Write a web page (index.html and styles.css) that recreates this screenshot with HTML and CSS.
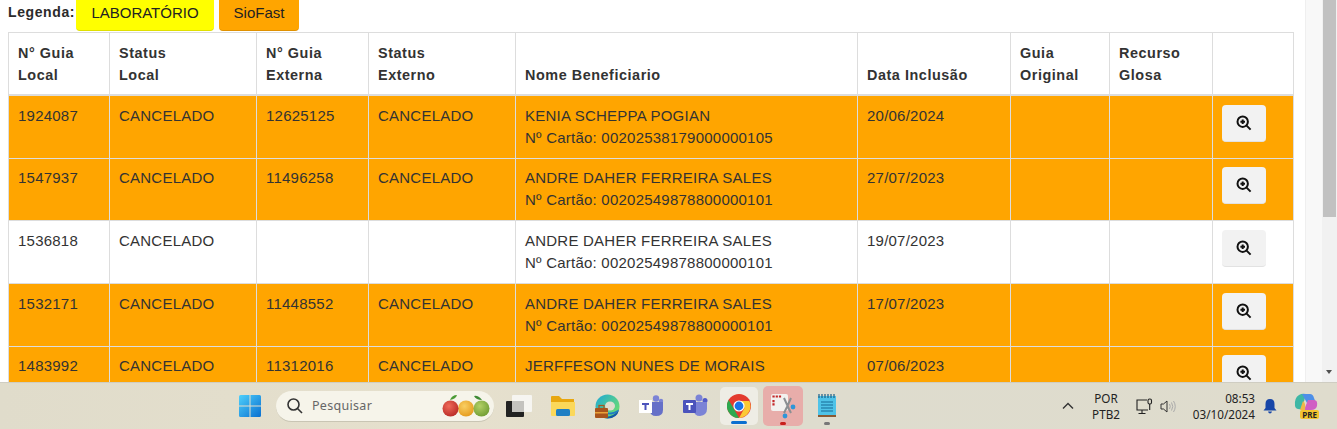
FILE: index.html
```html
<!DOCTYPE html>
<html>
<head>
    <meta charset="UTF-8">
    <link rel="stylesheet" href="styles.css">
</head>
<body>
    <div class="window">
        <div class="page">
            <div class="legend">
                <span class="legend-label">Legenda:</span>
                <button class="legend-btn lab">LABORATÓRIO</button>
                <button class="legend-btn sio">SioFast</button>
            </div>
            <table class="grid">
                <thead>
                    <tr>
                        <th class="c1">N° Guia<br>Local</th>
                        <th class="c2">Status<br>Local</th>
                        <th class="c3">N° Guia<br>Externa</th>
                        <th class="c4">Status<br>Externo</th>
                        <th class="c5">Nome Beneficiario</th>
                        <th class="c6">Data Inclusão</th>
                        <th class="c7">Guia<br>Original</th>
                        <th class="c8">Recurso<br>Glosa</th>
                        <th class="c9"></th>
                    </tr>
                </thead>
                <tbody>
                    <tr class="siofast">
                        <td>1924087</td>
                        <td>CANCELADO</td>
                        <td>12625125</td>
                        <td>CANCELADO</td>
                        <td>KENIA SCHEPPA POGIAN<br>Nº Cartão: 00202538179000000105</td>
                        <td>20/06/2024</td>
                        <td></td>
                        <td></td>
                        <td><button class="zoom-btn"><svg viewBox="0 0 16 16"><circle cx="6.7" cy="6.7" r="5.2"/><path d="M10.6 10.6 14.6 14.6M4.4 6.7H9M6.7 4.4V9"/></svg></button></td>
                    </tr>
                    <tr class="siofast">
                        <td>1547937</td>
                        <td>CANCELADO</td>
                        <td>11496258</td>
                        <td>CANCELADO</td>
                        <td>ANDRE DAHER FERREIRA SALES<br>Nº Cartão: 00202549878800000101</td>
                        <td>27/07/2023</td>
                        <td></td>
                        <td></td>
                        <td><button class="zoom-btn"><svg viewBox="0 0 16 16"><circle cx="6.7" cy="6.7" r="5.2"/><path d="M10.6 10.6 14.6 14.6M4.4 6.7H9M6.7 4.4V9"/></svg></button></td>
                    </tr>
                    <tr>
                        <td>1536818</td>
                        <td>CANCELADO</td>
                        <td></td>
                        <td></td>
                        <td>ANDRE DAHER FERREIRA SALES<br>Nº Cartão: 00202549878800000101</td>
                        <td>19/07/2023</td>
                        <td></td>
                        <td></td>
                        <td><button class="zoom-btn"><svg viewBox="0 0 16 16"><circle cx="6.7" cy="6.7" r="5.2"/><path d="M10.6 10.6 14.6 14.6M4.4 6.7H9M6.7 4.4V9"/></svg></button></td>
                    </tr>
                    <tr class="siofast">
                        <td>1532171</td>
                        <td>CANCELADO</td>
                        <td>11448552</td>
                        <td>CANCELADO</td>
                        <td>ANDRE DAHER FERREIRA SALES<br>Nº Cartão: 00202549878800000101</td>
                        <td>17/07/2023</td>
                        <td></td>
                        <td></td>
                        <td><button class="zoom-btn"><svg viewBox="0 0 16 16"><circle cx="6.7" cy="6.7" r="5.2"/><path d="M10.6 10.6 14.6 14.6M4.4 6.7H9M6.7 4.4V9"/></svg></button></td>
                    </tr>
                    <tr class="siofast">
                        <td>1483992</td>
                        <td>CANCELADO</td>
                        <td>11312016</td>
                        <td>CANCELADO</td>
                        <td>JERFFESON NUNES DE MORAIS</td>
                        <td>07/06/2023</td>
                        <td></td>
                        <td></td>
                        <td><button class="zoom-btn"><svg viewBox="0 0 16 16"><circle cx="6.7" cy="6.7" r="5.2"/><path d="M10.6 10.6 14.6 14.6M4.4 6.7H9M6.7 4.4V9"/></svg></button></td>
                    </tr>
                </tbody>
            </table>
        </div>
        <div class="gutter"></div>
        <div class="scrollbar">
            <div class="thumb"></div>
            <div class="arrow"></div>
        </div>
    </div>

    <div class="taskbar">
        <div class="slot">
            <svg width="24" height="24" viewBox="0 0 24 24">
                <defs>
                    <linearGradient id="win" x1="0" y1="0" x2="1" y2="1"><stop offset="0" stop-color="#4fd0fb"/><stop offset="1" stop-color="#0a6fd0"/></linearGradient>
                </defs>
                <path fill="url(#win)" d="M1 2.5Q1 1 2.5 1H11.5V11.5H1ZM12.5 1H21.5Q23 1 23 2.5V11.5H12.5ZM1 12.5H11.5V23H2.5Q1 23 1 21.5ZM12.5 12.5H23V21.5Q23 23 21.5 23H12.5Z"/>
            </svg>
        </div>
        <div class="search">
            <svg class="search-icon" width="18" height="18" viewBox="0 0 18 18"><circle cx="7.5" cy="7.5" r="5.5"/><path d="M11.5 11.5 16 16"/></svg>
            <span class="search-text">Pesquisar</span>
            <svg class="apples" width="54" height="24" viewBox="0 0 54 24">
                <defs>
                    <radialGradient id="red" cx="0.4" cy="0.35" r="0.7"><stop offset="0" stop-color="#ef6a5a"/><stop offset="1" stop-color="#b82a26"/></radialGradient>
                    <radialGradient id="yel" cx="0.4" cy="0.35" r="0.7"><stop offset="0" stop-color="#f9cf63"/><stop offset="1" stop-color="#e59a1c"/></radialGradient>
                    <radialGradient id="grn" cx="0.4" cy="0.35" r="0.7"><stop offset="0" stop-color="#b3d066"/><stop offset="1" stop-color="#6f9c33"/></radialGradient>
                </defs>
                <path d="M10 6Q12 1 17 1Q16 5 10 6Z" fill="#4b9a35"/>
                <path d="M42 6Q38 1 34 2Q36 6 42 6Z" fill="#3e8a35"/>
                <circle cx="26" cy="14.5" r="8" fill="url(#yel)"/>
                <circle cx="41.5" cy="14.5" r="8" fill="url(#grn)"/>
                <circle cx="10.5" cy="14.5" r="8" fill="url(#red)"/>
            </svg>
        </div>
        <div class="slot">
            <svg width="26" height="23" viewBox="0 0 26 23">
                <rect x="6" y="0" width="20" height="17" rx="1" fill="#f6f5f1"/>
                <rect x="0" y="6" width="18" height="16" rx="1" fill="#222"/>
                <rect x="6" y="6" width="12" height="11" fill="#c4c3bf"/>
            </svg>
        </div>
        <div class="slot">
            <svg width="26" height="24" viewBox="0 0 26 24">
                <path d="M1 3Q1 2 2 2H9L12 5H24V20Q24 21 23 21H2Q1 21 1 20Z" fill="#e8a70f"/>
                <path d="M1 8H25V21Q25 22 24 22H2Q1 22 1 21Z" fill="#fbd85a"/>
                <rect x="6" y="15" width="14" height="7" rx="1.5" fill="#1f7fc4"/>
            </svg>
        </div>
        <div class="slot">
            <svg width="25" height="25" viewBox="0 0 25 25">
                <defs>
                    <linearGradient id="edge" x1="0" y1="0" x2="1" y2="0.8"><stop offset="0" stop-color="#1ea8d8"/><stop offset="1" stop-color="#6fe06a"/></linearGradient>
                </defs>
                <circle cx="12.5" cy="12.5" r="12" fill="url(#edge)"/>
                <path d="M7 22Q16 25 24 16Q22 24.5 12.5 24.5Q9 24.5 7 22Z" fill="#1358a8"/>
                <path d="M9 17Q15 21 24 15.5Q23 19 16 20.5Q10 20.5 9 17Z" fill="#1f78c8"/>
                <ellipse cx="15" cy="12" rx="5" ry="4.5" fill="#dfdccd"/>
                <rect x="0" y="14" width="13" height="10" rx="1" fill="#a9541c"/>
                <rect x="0" y="18" width="13" height="1.5" fill="#e9a23a"/>
                <rect x="4" y="11.5" width="5" height="3" fill="none" stroke="#a9541c" stroke-width="1.2"/>
            </svg>
        </div>
        <div class="slot">
            <svg width="26" height="24" viewBox="0 0 26 24">
                <circle cx="18" cy="4.5" r="3.2" fill="#7b83d6"/>
                <circle cx="23" cy="7" r="2.2" fill="#7b83d6"/>
                <path d="M12 8H25V16Q25 22 18 22Q12 22 12 16Z" fill="#6670c8"/>
                <rect x="1" y="6" width="13" height="13" fill="#fff"/>
                <path d="M4 9H11V11H8.5V16H6.5V11H4Z" fill="#4b53bc"/>
            </svg>
        </div>
        <div class="slot">
            <svg width="26" height="24" viewBox="0 0 26 24">
                <circle cx="17" cy="4" r="3.5" fill="#7b83d6"/>
                <circle cx="23" cy="6.5" r="2.5" fill="#5059c9"/>
                <path d="M12 8H25V15Q25 21 18 22Q12 22 12 16Z" fill="#7b83d6"/>
                <rect x="1" y="6" width="13" height="13" rx="1" fill="#4b53bc"/>
                <path d="M4 9H11V11H8.5V16H6.5V11H4Z" fill="#fff"/>
            </svg>
        </div>
        <div class="slot active chrome">
            <svg width="24" height="24" viewBox="0 0 24 24">
                <circle cx="12" cy="12" r="12" fill="#e33b2e"/>
                <path d="M12 24A12 12 0 0 1 1.6 6L7 15 12 24Z" fill="#2da94f"/>
                <path d="M12 24 17.5 14 12 7H22.4A12 12 0 0 1 12 24Z" fill="#fcc934"/>
                <circle cx="12" cy="12" r="5.6" fill="#fff"/>
                <circle cx="12" cy="12" r="4.4" fill="#1a73e8"/>
            </svg>
            <span class="run-mark blue"></span>
        </div>
        <div class="slot active snip">
            <svg width="26" height="26" viewBox="0 0 26 26">
                <rect x="1" y="1" width="17" height="17" rx="2" fill="#f2f1ef"/>
                <path d="M3.5 4.5V3.5H12M3.5 7V13" fill="none" stroke="#c4282a" stroke-width="2.2" stroke-dasharray="2.2 1"/>
                <path d="M14 5 19 16 21 20M21 5 17 14 14 20" stroke="#8b8f93" stroke-width="2" fill="none"/>
                <circle cx="23" cy="14" r="2.4" fill="#2f96d8"/>
                <circle cx="15" cy="23" r="2.4" fill="#2f96d8"/>
            </svg>
            <span class="run-mark red"></span>
        </div>
        <div class="slot">
            <svg width="20" height="26" viewBox="0 0 20 26">
                <rect x="1" y="3" width="18" height="20" fill="#4fc3e8"/>
                <path d="M2 1V5M5 1V5M8 1V5M11 1V5M14 1V5M17 1V5" stroke="#1c5f86" stroke-width="1.2"/>
                <path d="M4 9H16M4 12H16M4 15H16M4 18H16" stroke="#166a96" stroke-width="1.2"/>
                <rect x="1" y="22" width="18" height="2" fill="#8a5a34"/>
            </svg>
            <span class="run-mark grey"></span>
        </div>

        <div class="tray">
            <svg class="chevron" width="12" height="8" viewBox="0 0 12 8"><path d="M1 6.5 6 1.5 11 6.5"/></svg>
            <div class="lang">POR<br>PTB2</div>
            <svg class="net" width="17" height="17" viewBox="0 0 17 17">
                <path d="M11 2H1V12H12M6 12V15.5M2.5 15.5H9.5"/>
                <rect x="12" y="1" width="3.5" height="5" rx="1.5"/>
                <path d="M13.7 6V12"/>
            </svg>
            <svg class="sound" width="17" height="15" viewBox="0 0 17 15">
                <path d="M1 5H3.5L7 2V13L3.5 10H1Z"/>
                <path class="wave" d="M9.5 5Q11 7.5 9.5 10M11.5 3.5Q14 7.5 11.5 11.5M13.5 2Q17 7.5 13.5 13"/>
            </svg>
            <div class="clock">08:53<br>03/10/2024</div>
            <svg class="bell" width="16" height="16" viewBox="0 0 16 16"><path d="M8 1Q12.5 1 12.5 6V10L14.5 12.5H1.5L3.5 10V6Q3.5 1 8 1ZM6 13.5H10Q9.5 15.5 8 15.5Q6.5 15.5 6 13.5Z"/></svg>
            <div class="copilot">
                <svg width="24" height="20" viewBox="0 0 24 20">
                    <path d="M1 13Q0 5 5 2Q8 0 12 1L8 16Q2 17 1 13Z" fill="#3fb7a5"/>
                    <path d="M8 1H16Q19 1 20 5L22 10Q15 14 13 10Z" fill="#4d8fe8"/>
                    <path d="M14 7H20Q24 7 23 13Q22 17 17 17H10Z" fill="#d05fc4"/>
                    <path d="M6 17 9 8Q12 10 11 17Z" fill="#f0b64a"/>
                </svg>
                <span class="pre">PRE</span>
            </div>
        </div>
    </div>
</body>
</html>
```

FILE: styles.css
```css
html, body {
    margin: 0;
    padding: 0;
}
body {
    width: 1337px;
    height: 429px;
    overflow: hidden;
    font-family: "Liberation Sans", Arial, sans-serif;
    color: #333;
}
.window {
    display: flex;
    height: 382px;
    overflow: hidden;
    background-color: white;
}
.page {
    width: 1305px;
    padding-left: 8px;
    box-sizing: border-box;
}
.gutter {
    width: 17px;
    background-color: #f8f8f8;
    border-left: 1px solid #efefef;
    box-sizing: border-box;
}
.scrollbar {
    width: 15px;
    display: flex;
    flex-direction: column;
    background-color: #f1f1f1;
}
.thumb {
    width: 13px;
    height: 217px;
    margin-left: 1px;
    background-color: #c1c1c1;
}
.arrow {
    width: 0;
    height: 0;
    margin: 153px 0 0 4px;
    border-left: 3.5px solid transparent;
    border-right: 3.5px solid transparent;
    border-top: 4px solid #505050;
}

/* legenda */
.legend {
    display: flex;
    align-items: flex-start;
    height: 32px;
}
.legend-label {
    width: 68px;
    font-size: 14px;
    font-weight: bold;
    letter-spacing: 0.6px;
    padding-top: 4px;
    color: #2b2b2b;
}
.legend-btn {
    height: 37px;
    margin-top: -6px;
    border: none;
    border-bottom: 1px solid rgba(0, 0, 0, 0.12);
    border-radius: 4px;
    font-family: inherit;
    font-size: 15px;
    color: #222;
    padding: 0;
}
.lab {
    width: 138px;
    background-color: yellow;
}
.sio {
    width: 80px;
    margin-left: 5px;
    background-color: orange;
}

/* tabela */
.grid {
    border-collapse: collapse;
    table-layout: fixed;
    width: 1286px;
    font-size: 15px;
    line-height: 22px;
    letter-spacing: 0.23px;
}
.grid th, .grid td {
    border: 1px solid #ddd;
    vertical-align: top;
    text-align: left;
    box-sizing: border-box;
}
.grid th {
    vertical-align: bottom;
    font-size: 14.4px;
    letter-spacing: 0.55px;
    padding: 9px 9px 8.4px;
    border-bottom-width: 2px;
}
.grid td {
    padding: 8.8px 9px 8px;
    height: 62.67px;
}
.c1 { width: 101px; }
.c2 { width: 147px; }
.c3 { width: 112px; }
.c4 { width: 147px; }
.c5 { width: 342px; }
.c6 { width: 153px; }
.c7 { width: 99px; }
.c8 { width: 103px; }
.c9 { width: 81px; }
.siofast td {
    background-color: orange;
}
.zoom-btn {
    display: flex;
    align-items: center;
    justify-content: center;
    width: 44px;
    height: 37px;
    padding: 0;
    border: none;
    border-bottom: 1px solid #e2e2e2;
    border-radius: 4px;
    background-color: #f2f2f2;
}
.zoom-btn svg {
    width: 16px;
    height: 16px;
    fill: none;
    stroke: #111;
    stroke-width: 2;
}

/* barra de tarefas */
.taskbar {
    display: flex;
    align-items: center;
    height: 47px;
    padding-left: 228px;
    box-sizing: border-box;
    background: linear-gradient(90deg, #e0dccb 0%, #e6e0cd 35%, #dedcce 60%, #dfdccd 100%);
    border-top: 1px solid #cfcdc2;
}
.slot {
    position: relative;
    display: flex;
    align-items: center;
    justify-content: center;
    width: 44px;
    height: 40px;
    flex: none;
}
.search {
    display: flex;
    align-items: center;
    width: 218px;
    height: 31px;
    margin: 0 3px 0 4px;
    box-sizing: border-box;
    padding-left: 10px;
    border-radius: 16px;
    background-color: #f6f4ea;
    border-bottom: 1px solid #c9c5b4;
}
.search-icon {
    fill: none;
    stroke: #333;
    stroke-width: 1.6;
}
.search-text {
    margin-left: 8px;
    font-family: "Noto Sans", sans-serif;
    font-size: 12.5px;
    color: #666;
    letter-spacing: 0.3px;
    flex: 1;
}
.apples {
    flex: none;
}
.active {
    border-radius: 5px;
}
.chrome {
    width: 38px;
    height: 38px;
    margin: 0 3px;
    background-color: #eeede5;
}
.snip {
    width: 40px;
    margin: 0 2px;
    background-color: #e8adaa;
}
.run-mark {
    position: absolute;
    bottom: 1px;
    left: 50%;
    height: 3px;
    border-radius: 2px;
}
.run-mark.blue {
    width: 16px;
    margin-left: -8px;
    background-color: #0a6fd0;
}
.run-mark.red {
    width: 6px;
    margin-left: -3px;
    background-color: #c8201c;
}
.run-mark.grey {
    width: 6px;
    margin-left: -3px;
    background-color: #777;
}
.tray {
    display: flex;
    align-items: center;
    margin-left: auto;
    height: 100%;
    font-family: "Noto Sans", sans-serif;
    font-size: 11.7px;
    line-height: 16px;
    color: #222;
}
.chevron {
    margin-right: 16px;
    fill: none;
    stroke: #333;
    stroke-width: 1.4;
}
.lang {
    width: 32px;
    text-align: center;
    margin-right: 14px;
}
.net {
    margin-right: 7px;
    fill: none;
    stroke: #222;
    stroke-width: 1.1;
}
.sound {
    fill: none;
    stroke: #333;
    stroke-width: 1;
}
.sound .wave {
    stroke: #aaa;
}
.clock {
    width: 78px;
    text-align: right;
}
.bell {
    margin-left: 7px;
    fill: #1746a8;
}
.copilot {
    position: relative;
    width: 24px;
    height: 26px;
    margin: 0 19px 0 16px;
}
.pre {
    position: absolute;
    right: -1px;
    bottom: 0;
    padding: 0 2px;
    border-radius: 2px;
    background-color: #f4c430;
    font-size: 8px;
    font-weight: bold;
    line-height: 9px;
    color: #222;
}
```
